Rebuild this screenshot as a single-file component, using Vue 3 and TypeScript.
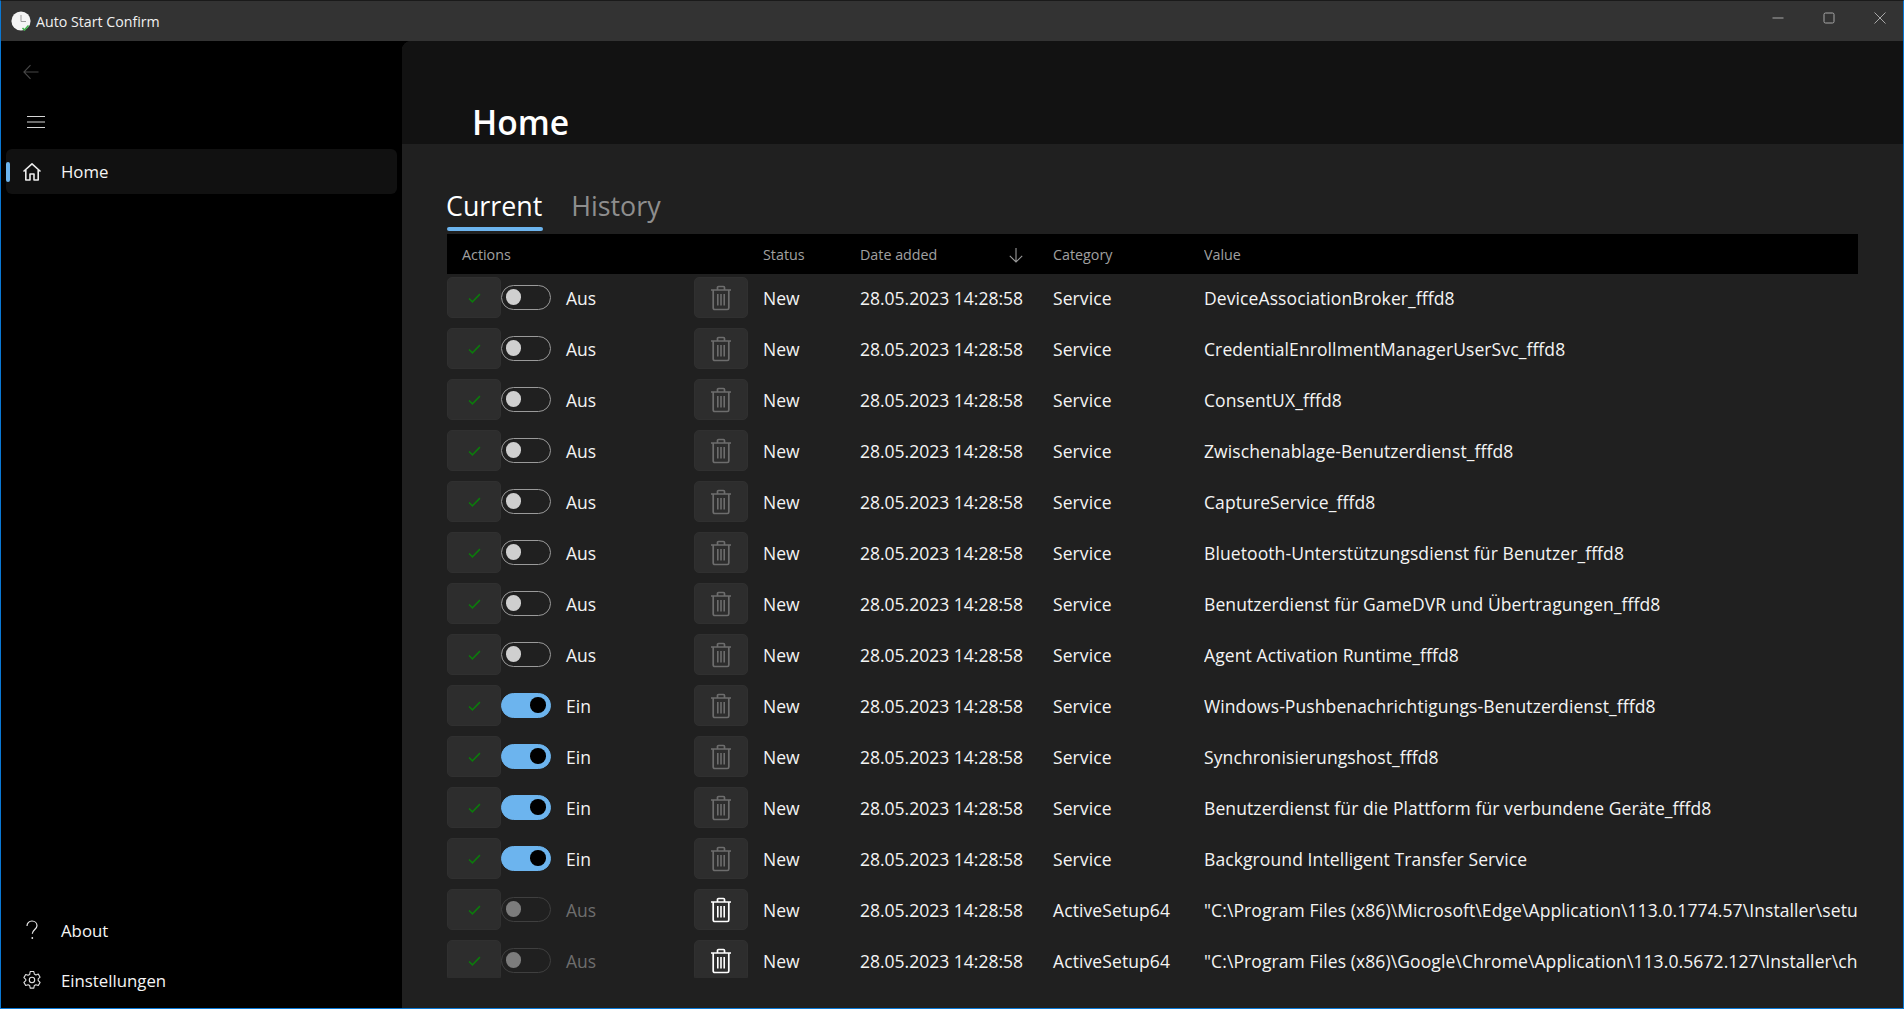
<script setup lang="ts">
interface Row { on: boolean; label: string; disabled: boolean; trash: boolean; cat: string; value: string }
const svc = (value: string, on = false): Row => ({ on, label: on ? 'Ein' : 'Aus', disabled: false, trash: false, cat: 'Service', value })
const rows: Row[] = [
  svc('DeviceAssociationBroker_fffd8'),
  svc('CredentialEnrollmentManagerUserSvc_fffd8'),
  svc('ConsentUX_fffd8'),
  svc('Zwischenablage-Benutzerdienst_fffd8'),
  svc('CaptureService_fffd8'),
  svc('Bluetooth-Unterstützungsdienst für Benutzer_fffd8'),
  svc('Benutzerdienst für GameDVR und Übertragungen_fffd8'),
  svc('Agent Activation Runtime_fffd8'),
  svc('Windows-Pushbenachrichtigungs-Benutzerdienst_fffd8', true),
  svc('Synchronisierungshost_fffd8', true),
  svc('Benutzerdienst für die Plattform für verbundene Geräte_fffd8', true),
  svc('Background Intelligent Transfer Service', true),
  { on: false, label: 'Aus', disabled: true, trash: true, cat: 'ActiveSetup64', value: '"C:\\Program Files (x86)\\Microsoft\\Edge\\Application\\113.0.1774.57\\Installer\\setup.exe" --configure-user-settings' },
  { on: false, label: 'Aus', disabled: true, trash: true, cat: 'ActiveSetup64', value: '"C:\\Program Files (x86)\\Google\\Chrome\\Application\\113.0.5672.127\\Installer\\chrmstp.exe" --configure-user-settings' },
]
</script>

<template>
  <div class="window">
    <header class="titlebar">
      <svg class="logo" width="20" height="20" viewBox="0 0 20 20">
        <circle cx="10" cy="10" r="9.6" fill="#f4f4f4" />
        <path d="M10 4v6.5h5" fill="none" stroke="#9a9a9a" stroke-width="1" />
        <path d="M11.5 17l2 2 4-4.5" fill="none" stroke="#3fae49" stroke-width="1.6" />
      </svg>
      <span class="app-title">Auto Start Confirm</span>
      <div class="caption">
        <svg width="12" height="12" viewBox="0 0 12 12"><path d="M0.5 6h11" stroke="#a8a8a8" stroke-width="1" /></svg>
        <svg width="12" height="12" viewBox="0 0 12 12"><rect x="1" y="1" width="10" height="10" rx="1.5" fill="none" stroke="#a8a8a8" stroke-width="1" /></svg>
        <svg width="12" height="12" viewBox="0 0 12 12"><path d="M0.5 0.5l11 11M11.5 0.5l-11 11" stroke="#a8a8a8" stroke-width="1" /></svg>
      </div>
    </header>

    <div class="body">
      <aside class="sidebar">
        <div class="icon-btn back">
          <svg width="16" height="16" viewBox="0 0 16 16"><path d="M15.500 8H1M7.500 1.200L.9 8l6.600 6.800" fill="none" stroke="#474747" stroke-width="1.100" /></svg>
        </div>
        <div class="icon-btn burger">
          <svg width="20" height="14" viewBox="0 0 20 14"><path d="M1 1.500h18M1 7h18M1 12.500h18" stroke="#d6d6d6" stroke-width="1.200" /></svg>
        </div>
        <div class="nav-item active">
          <span class="indicator"></span>
          <svg class="nav-icon" width="20" height="20" viewBox="0 0 20 20"><path d="M1.500 9.500L10 1.800l8.500 7.700M3.800 8v10h4.200v-6h4v6h4.200V8" fill="none" stroke="#ececec" stroke-width="1.600" stroke-linejoin="round" /></svg>
          <span>Home</span>
        </div>
        <div class="spacer"></div>
        <div class="nav-item plain">
          <svg class="nav-icon" width="20" height="20" viewBox="0 0 20 20">
            <path d="M5 6c0-3 2.200-5 5-5s5 2 5 4.800c0 3.600-4.700 4-4.700 8" fill="none" stroke="#e8e8e8" stroke-width="1.200" />
            <circle cx="10.300" cy="18" r="0.900" fill="#e8e8e8" />
          </svg>
          <span>About</span>
        </div>
        <div class="nav-item plain">
          <svg class="nav-icon" width="20" height="20" viewBox="0 0 20 20">
            <path d="M8.200 1.500h3.600l.5 2.500 1.600.9 2.400-.8 1.800 3.100-1.900 1.700v1.800l1.900 1.700-1.800 3.100-2.400-.8-1.600.9-.5 2.500H8.200l-.5-2.500-1.600-.9-2.400.8-1.800-3.100 1.900-1.700V9.300L1.900 7.600l1.800-3.100 2.400.8 1.600-.9z" fill="none" stroke="#e0e0e0" stroke-width="1.100" stroke-linejoin="round" />
            <circle cx="10" cy="10" r="2.700" fill="none" stroke="#e0e0e0" stroke-width="1.100" />
          </svg>
          <span>Einstellungen</span>
        </div>
      </aside>

      <main class="main">
        <div class="page-head"><h1>Home</h1></div>
        <div class="content">
          <nav class="tabs">
            <div class="tab selected">Current</div>
            <div class="tab">History</div>
          </nav>
          <div class="table">
            <div class="thead">
              <div class="c-actions th-first">Actions</div>
              <div class="c-status">Status</div>
              <div class="c-date">
                Date added
                <svg class="sort" width="16" height="16" viewBox="0 0 16 16"><path d="M8 1v14M1.800 8.800L8 15l6.200-6.200" fill="none" stroke="#9a9a9a" stroke-width="1.100" /></svg>
              </div>
              <div class="c-cat">Category</div>
              <div class="c-value">Value</div>
            </div>
            <div class="tbody">
              <div v-for="(r, i) in rows" :key="i" class="row">
                <div class="c-actions actions">
                  <button class="btn">
                    <svg width="13" height="10" viewBox="0 0 14 11"><path d="M1 6l3.700 3.700L13 1.200" fill="none" stroke="#0c7a0c" stroke-width="1.700" /></svg>
                  </button>
                  <span class="toggle" :class="{ on: r.on, disabled: r.disabled }"><i></i></span>
                  <span class="toggle-label" :class="{ disabled: r.disabled }">{{ r.label }}</span>
                  <button class="btn">
                    <svg width="22" height="26" viewBox="0 0 22 26" :class="r.trash ? 'trash-on' : 'trash-off'">
                      <path d="M1 5h20M7.500 5V2.500a1 1 0 0 1 1-1h5a1 1 0 0 1 1 1V5M3.200 5v18a1.500 1.500 0 0 0 1.500 1.500h12.600a1.500 1.500 0 0 0 1.500-1.500V5" fill="none" stroke-width="1.700" />
                      <path d="M7.800 9v11.500M11 9v11.500M14.200 9v11.500" fill="none" stroke-width="1.600" />
                    </svg>
                  </button>
                </div>
                <div class="c-status">New</div>
                <div class="c-date">28.05.2023 14:28:58</div>
                <div class="c-cat">{{ r.cat }}</div>
                <div class="c-value">{{ r.value }}</div>
              </div>
            </div>
          </div>
        </div>
      </main>
    </div>
  </div>
</template>

<style>
html, body { margin: 0; background: #000; overflow: hidden; }
</style>

<style scoped>
* { box-sizing: border-box; }
.window {
  width: 1904px; height: 1009px; display: flex; flex-direction: column;
  border: 1px solid #0a78d4; border-top-color: #1a1a1a;
  font-family: "Open Sans", "Noto Sans", sans-serif; color: #fff; background: #000; overflow: hidden;
}
.titlebar { height: 40px; flex: none; background: #333; display: flex; align-items: center; padding-left: 10px; }
.logo { margin-right: 5px; }
.app-title { font-size: 14.200px; color: #f0f0f0; }
.caption { margin-left: auto; display: flex; align-items: center; gap: 39px; padding: 0 17px 7px 0; }
.body { flex: 1; display: flex; min-height: 0; }
.sidebar { width: 401px; flex: none; display: flex; flex-direction: column; padding: 0 5px 4px; background: #000; }
.icon-btn { display: flex; align-items: center; }
.back { height: 50px; padding: 12px 0 0 17px; }
.burger { height: 51px; padding: 11px 0 0 20px; }
.nav-item { height: 45px; display: flex; align-items: center; position: relative; font-size: 16.800px; padding-left: 16px; border-radius: 6px; color: #f5f5f5; }
.nav-item .nav-icon { width: 20px; margin-right: 19px; flex: none; }
.nav-item.active { background: #111; margin-top: 7px; }
.nav-item.plain { height: 50px; top: 1px; }
.indicator { position: absolute; left: 0; top: 13px; width: 4px; height: 20px; border-radius: 2px; background: #6cb4ee; }
.spacer { flex: 1; }
.main { flex: 1; min-width: 0; display: flex; flex-direction: column; background: #202020; border-top-left-radius: 9px; overflow: hidden; }
.page-head { height: 103px; flex: none; background: #121212; padding: 61px 0 0 70px; }
h1 { margin: 0; font-size: 33.600px; line-height: 40px; font-weight: 600; color: #fff; }
.content { flex: 1; padding: 40px 45px 0 45px; min-height: 0; display: flex; flex-direction: column; }
.tabs { display: flex; gap: 29px; height: 47px; flex: none; margin-left: -1px; }
.tab { font-size: 26.800px; line-height: 44px; color: #8e8e8e; position: relative; height: 47px; }
.tab.selected { color: #fff; }
.tab.selected::after { content: ""; position: absolute; left: 1px; right: -1px; bottom: 0; height: 4px; border-radius: 2px; background: #6cb4ee; }
.table { margin-top: 3px; flex: none; }
.thead { height: 40px; background: #000; display: flex; align-items: center; font-size: 14.300px; color: #a0a0a0; }
.th-first { padding-left: 15px; }
.tbody { height: 704px; padding-top: 3px; overflow: hidden; }
.row { height: 51px; display: flex; align-items: center; font-size: 17.500px; color: #f4f4f4; white-space: nowrap; }
.c-actions { width: 316px; flex: none; }
.c-status { width: 97px; flex: none; }
.c-date { width: 193px; flex: none; position: relative; }
.c-cat { width: 151px; flex: none; }
.row .c-cat, .row .c-value { letter-spacing: 0.100px; }
.c-value { flex: 1; min-width: 0; overflow: hidden; }
.sort { position: absolute; left: 148px; top: 2px; }
.actions { display: flex; align-items: center; align-self: flex-start; height: 41px; }
.row .c-status, .row .c-date, .row .c-cat, .row .c-value { margin-top: -10px; }
.btn { width: 54px; height: 41px; flex: none; padding: 0; background: #2d2d2d; border: 1px solid #303030; border-radius: 5px; display: flex; align-items: center; justify-content: center; }
.toggle { width: 50px; height: 25px; flex: none; border: 1.500px solid #9a9a9a; border-radius: 13px; position: relative; }
.toggle i { position: absolute; left: 3.500px; top: 3.250px; width: 15.500px; height: 15.500px; border-radius: 50%; background: #cfcfcf; }
.toggle.on { background: #6cb4ee; border-color: #6cb4ee; }
.toggle.on i { left: auto; right: 4.500px; background: #000; }
.toggle.disabled { border-color: #3f3f3f; }
.toggle.disabled i { background: #7c7c7c; }
.toggle-label { width: 143px; padding-left: 15px; flex: none; }
.toggle-label.disabled { color: #6e6e6e; }
.trash-off { stroke: #6d6d6d; }
.trash-on { stroke: #fff; }
</style>
